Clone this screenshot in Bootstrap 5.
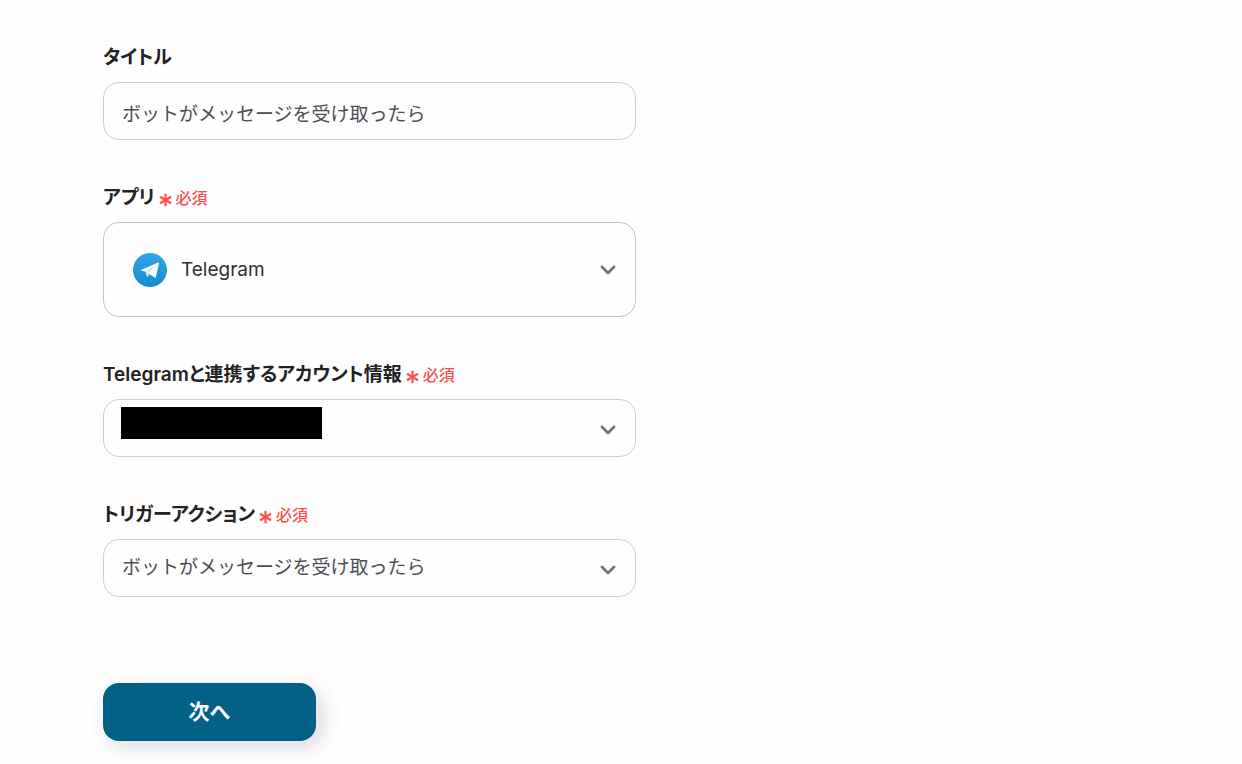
<!DOCTYPE html>
<html lang="ja">
<head>
<meta charset="utf-8">
<meta name="viewport" content="width=device-width, initial-scale=1">
<title>トリガー設定</title>
<link href="https://cdn.jsdelivr.net/npm/bootstrap@5.3.0/dist/css/bootstrap.min.css" rel="stylesheet">
<style>
  body {
    background: #fefefe;
    color: #222;
    font-family: Inter, "Noto Sans CJK JP", sans-serif;
  }
  .trigger-page { padding: 44px 24px 24px 103px; }
  .trigger-form { max-width: 533px; gap: 44px; }
  .form-label {
    font-size: 19px;
    line-height: 28px;
    font-weight: 600;
    font-feature-settings: "palt";
    margin-bottom: 10px;
    gap: 4px;
  }
  .required-note {
    color: #fa5050;
    font-size: 16px;
    line-height: 24px;
    font-weight: 500;
    gap: 4px;
  }
  .form-control, .form-select {
    height: 58px;
    padding: 0 48px 0 18px;
    border: 1px solid #cbcfda;
    border-radius: 16px;
    background-color: transparent;
    color: #4e4e52;
    font-size: 19px;
  }
  .form-control { padding-top: 2px; }
  .form-select {
    background-image: url("data:image/svg+xml,%3Csvg xmlns='http://www.w3.org/2000/svg' viewBox='0 0 16 10'%3E%3Cpath d='M2 2l6 6 6-6' fill='none' stroke='%23737373' stroke-width='2.8' stroke-linecap='round' stroke-linejoin='round'/%3E%3C/svg%3E");
    background-size: 16px 10px;
    background-position: right 19px top 25px;
  }
  .app-select {
    height: 95px;
    padding-left: 77px;
    padding-top: 2px;
    border-color: #c4c4c8;
    background-position: right 19px center;
    color: #2e2e32;
  }
  .app-logo { left: 30px; top: 31px; pointer-events: none; }
  .account-mask {
    left: 18px; top: 8px;
    width: 201px; height: 32px;
    background: #000;
    pointer-events: none;
  }
  .next-btn {
    width: 213px;
    height: 58px;
    margin-top: 42px;
    border: 0;
    border-radius: 16px;
    background: #036087;
    color: #fff;
    font-size: 21px;
    font-weight: 600;
    box-shadow: 6px 6px 20px rgba(70, 70, 110, .2);
  }
  .next-btn:hover { background: #02506f; color: #fff; }
</style>
</head>
<body>
<svg width="0" height="0" class="position-absolute" aria-hidden="true">
  <symbol id="asterisk" viewBox="0 0 13 14">
    <path d="M6.500 .8v12.400M1 3.800l11 6.400M1 10.200l11-6.400" stroke="currentColor" stroke-width="2.200" fill="none"/>
  </symbol>
</svg>
<main class="trigger-page">
  <form class="trigger-form d-flex flex-column">
    <div>
      <label class="form-label d-flex align-items-center" for="title">タイトル</label>
      <input class="form-control" id="title" type="text" value="ボットがメッセージを受け取ったら">
    </div>
    <div>
      <label class="form-label d-flex align-items-center" for="app">アプリ
        <span class="required-note d-inline-flex align-items-center"><svg class="mt-1" width="13" height="14" aria-hidden="true"><use href="#asterisk"/></svg>必須</span>
      </label>
      <div class="position-relative">
        <select class="form-select app-select" id="app"><option>Telegram</option></select>
        <svg class="app-logo position-absolute" width="34" height="34" viewBox="0 0 34 34" aria-hidden="true">
          <defs><linearGradient id="sky" x1="0" y1="0" x2="0" y2="1"><stop offset="0" stop-color="#30a7e3"/><stop offset="1" stop-color="#1689d4"/></linearGradient></defs>
          <circle cx="17" cy="17" r="17" fill="url(#sky)"/>
          <path d="M7.200 17.200L25.200 9.500q.9-.2.700.9l-3 13.500q-.4 1.300-1.500.6l-4.700-3.200-2.500 2.900-1.700-5.500-5.200-1.500z" fill="#fff"/>
          <path d="M12.500 18.700l10.300-6.500-7.900 7.900-.7 4.100z" fill="#cfd9ec"/>
          <path d="M14.200 24.200l.7-4.100 1.800 1.200z" fill="#b3c3df"/>
        </svg>
      </div>
    </div>
    <div>
      <label class="form-label d-flex align-items-center" for="account">Telegramと連携するアカウント情報
        <span class="required-note d-inline-flex align-items-center"><svg class="mt-1" width="13" height="14" aria-hidden="true"><use href="#asterisk"/></svg>必須</span>
      </label>
      <div class="position-relative">
        <select class="form-select" id="account"><option></option></select>
        <span class="account-mask position-absolute"></span>
      </div>
    </div>
    <div>
      <label class="form-label d-flex align-items-center" for="action">トリガーアクション
        <span class="required-note d-inline-flex align-items-center"><svg class="mt-1" width="13" height="14" aria-hidden="true"><use href="#asterisk"/></svg>必須</span>
      </label>
      <select class="form-select" id="action"><option>ボットがメッセージを受け取ったら</option></select>
    </div>
    <button class="btn next-btn" type="submit">次へ</button>
  </form>
</main>
<script src="https://cdn.jsdelivr.net/npm/bootstrap@5.3.0/dist/js/bootstrap.bundle.min.js"></script>
</body>
</html>
